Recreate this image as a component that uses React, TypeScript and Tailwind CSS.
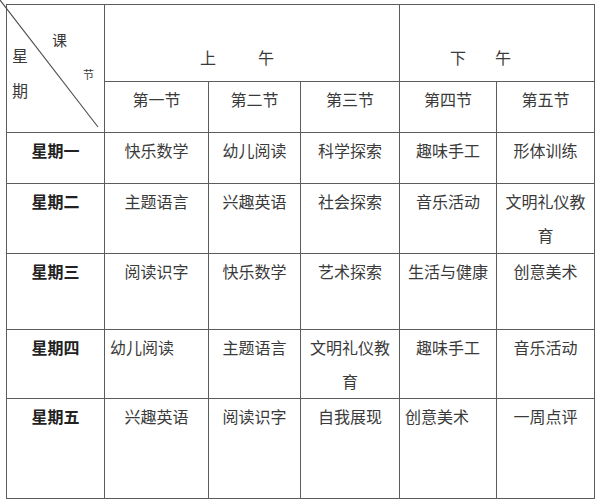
const days = [
  {
    day: '星期一',
    h: 'h-[51px]',
    cells: ['快乐数学', '幼儿阅读', '科学探索', '趣味手工', '形体训练'],
  },
  {
    day: '星期二',
    h: 'h-[70px]',
    cells: ['主题语言', '兴趣英语', '社会探索', '音乐活动', '文明礼仪教|育'],
  },
  {
    day: '星期三',
    h: 'h-[76px]',
    cells: ['阅读识字', '快乐数学', '艺术探索', '生活与健康', '创意美术'],
  },
  {
    day: '星期四',
    h: 'h-[69px]',
    cells: ['<幼儿阅读', '主题语言', '文明礼仪教|育', '趣味手工', '音乐活动'],
  },
  {
    day: '星期五',
    h: 'h-[100px]',
    cells: ['兴趣英语', '阅读识字', '自我展现', '<创意美术', '一周点评'],
  },
];

const periods = ['第一节', '第二节', '第三节', '第四节', '第五节'];

const line = 'border-r border-b border-[#5c5c5c]';

function Cell({ text }: { text: string }) {
  // "<" 前缀 = 左对齐（原表里几格没居中）
  const left = text.startsWith('<');
  const clean = left ? text.slice(1) : text;
  const [a, b] = clean.split('|');
  return (
    <div
      className={`${line} leading-[34px] text-[16px] text-[#3a3a3a] ${
        left ? 'text-left pl-[5px]' : 'text-center'
      }`}
    >
      {a}
      {b ? (
        <>
          <br />
          {b}
        </>
      ) : null}
    </div>
  );
}

export default function App() {
  return (
    <div
      className="w-[597px] h-[500px] overflow-hidden bg-white"
      style={{ fontFamily: '"Noto Sans CJK SC", "Noto Sans", sans-serif' }}
    >
      <div className="ml-[6px] mt-[4px] w-[589px] border-l border-t border-[#5c5c5c] grid grid-cols-[98px_104px_92px_99px_97px_98px] grid-rows-[77px_51px]">
        {/* 斜线表头 */}
        <div className={`${line} row-span-2 relative`}>
          <svg
            className="absolute left-0 top-0 overflow-visible"
            width="97"
            height="127"
            viewBox="0 0 97 127"
          >
            <line x1="-7" y1="-5" x2="91" y2="122" stroke="#4a4a4a" strokeWidth="1.1" />
          </svg>
          <span className="absolute left-[5px] top-[42px] text-[16px] leading-none text-[#3a3a3a]">
            星
          </span>
          <span className="absolute left-[5px] top-[77px] text-[16px] leading-none text-[#3a3a3a]">
            期
          </span>
          <span className="absolute left-[45px] top-[27px] text-[15px] leading-none text-[#3a3a3a]">
            课
          </span>
          <span className="absolute left-[76px] top-[64px] text-[11px] leading-none text-[#3a3a3a]">
            节
          </span>
        </div>
        <div className={`${line} col-span-3 flex justify-center pt-[41px] pr-[30px] text-[16px] leading-[22px] text-[#3a3a3a]`}>
          <span>上</span>
          <span className="ml-[42px]">午</span>
        </div>
        <div className={`${line} col-span-2 flex justify-center pt-[41px] pr-[33px] text-[16px] leading-[22px] text-[#3a3a3a]`}>
          <span>下</span>
          <span className="ml-[29px]">午</span>
        </div>
        {periods.map((p) => (
          <div key={p} className={`${line} text-center leading-[34px] text-[16px] text-[#3a3a3a]`}>
            {p}
          </div>
        ))}
      </div>

      {days.map((d) => (
        <div
          key={d.day}
          className={`ml-[6px] w-[589px] border-l border-[#5c5c5c] grid grid-cols-[98px_104px_92px_99px_97px_98px] ${d.h}`}
        >
          <div className={`${line} text-center leading-[34px] text-[16px] font-bold text-[#222]`}>
            {d.day}
          </div>
          {d.cells.map((c, i) => (
            <Cell key={i} text={c} />
          ))}
        </div>
      ))}
    </div>
  );
}
